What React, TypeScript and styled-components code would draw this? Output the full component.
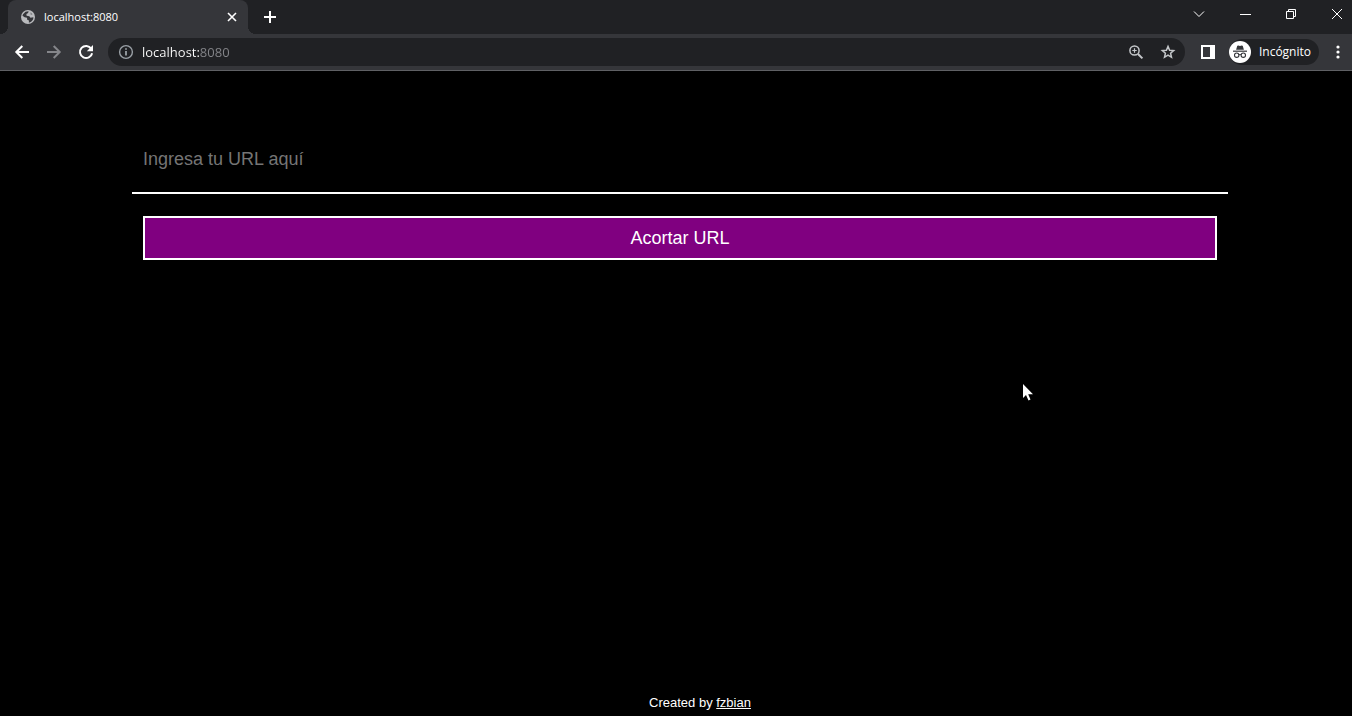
import React from 'react';
import styled, { createGlobalStyle } from 'styled-components';

const GlobalStyle = createGlobalStyle`
  * { box-sizing: border-box; }
  html, body, #root { height: 100%; }
  body { margin: 0; background: #000; overflow: hidden; }
  button, input { font: inherit; margin: 0; }
`;

const Window = styled.div`
  display: flex;
  flex-direction: column;
  min-height: 100%;
  background: #000;
  position: relative;
`;

const Chrome = styled.header`
  font-family: 'Open Sans', 'Noto Sans', sans-serif;
  color: #fff;
  background: #202124;
`;

const TabStrip = styled.div`
  display: flex;
  align-items: center;
  height: 34px;
  padding-left: 8px;
`;

const Tab = styled.div`
  display: flex;
  align-items: center;
  gap: 8px;
  position: relative;
  width: 240px;
  height: 34px;
  padding: 0 8px 0 12px;
  border-radius: 8px 8px 0 0;
  background: #35363a;
  font-size: 11px;
  line-height: 16px;

  &::before,
  &::after {
    content: '';
    position: absolute;
    bottom: 0;
    width: 8px;
    height: 8px;
  }
  &::before {
    right: 100%;
    background: radial-gradient(circle at 0 0, transparent 8px, #35363a 8px);
  }
  &::after {
    left: 100%;
    background: radial-gradient(circle at 100% 0, transparent 8px, #35363a 8px);
  }
`;

const TabTitle = styled.span`
  flex: 1;
`;

const IconButton = styled.button<{ $width?: number; $tone?: string }>`
  display: flex;
  align-items: center;
  justify-content: center;
  flex: none;
  width: ${(p) => p.$width ?? 32}px;
  height: 28px;
  padding: 0;
  border: 0;
  background: none;
  color: ${(p) => p.$tone ?? '#fff'};
`;

const WindowButtons = styled.div`
  display: flex;
  margin-left: auto;
  align-self: flex-start;
  margin-right: -8px;
`;

const Toolbar = styled.div`
  display: flex;
  align-items: center;
  height: 37px;
  padding: 0 0 0 6px;
  background: #35363a;
  border-bottom: 1px solid #5f6064;
`;

const AddressBar = styled.form`
  display: flex;
  align-items: center;
  flex: 1;
  height: 28px;
  margin: 0 7px 0 6px;
  padding: 0 1px 0 10px;
  border-radius: 14px;
  background: #202124;
  color: #9aa0a6;
`;

const AddressInput = styled.input`
  flex: 1;
  min-width: 0;
  height: 24px;
  padding: 0;
  margin-left: 8px;
  border: 0;
  outline: 0;
  font-size: 13px;
  color: #fff;
  background: linear-gradient(to right, #fff 58px, #85868a 58px);
  background-clip: text;
  -webkit-text-fill-color: transparent;
`;

const Profile = styled.button`
  display: flex;
  align-items: center;
  gap: 8px;
  height: 26px;
  margin: 0 5px;
  padding: 0 8px 0 0;
  border: 0;
  border-radius: 13px;
  background: #202124;
  color: #fff;
  font-size: 12px;
  line-height: 16px;
`;

const Page = styled.main`
  display: flex;
  flex-direction: column;
  flex: 1;
  padding: 53px 124px 0 132px;
  font-family: 'Liberation Sans', Arial, sans-serif;
  color: #fff;
`;

const ShortenForm = styled.form`
  display: flex;
  flex-direction: column;
`;

const UrlInput = styled.input`
  height: 70px;
  padding: 2px 11px 0;
  border: 0;
  border-bottom: 2px solid #fff;
  outline: 0;
  background: transparent;
  color: #fff;
  font-size: 18px;
  &::placeholder { color: #757575; opacity: 1; }
`;

const SubmitButton = styled.button`
  height: 44px;
  margin: 22px 11px 0;
  padding: 0;
  border: 2px solid #fff;
  background: #800080;
  color: #fff;
  font-size: 18px;
  line-height: 20px;
`;

const Footer = styled.footer`
  margin-top: auto;
  padding: 0 0 4px 40px;
  text-align: center;
  font-size: 13px;
  line-height: 18px;
`;

const FooterLink = styled.a`
  color: inherit;
  text-decoration: underline;
`;

const Pointer = styled.svg`
  position: absolute;
  left: 1022px;
  top: 383px;
`;

const Stroke = ({ size, d, w = 2 }: { size: number; d: string; w?: number }) => (
  <svg width={size} height={size} viewBox={`0 0 ${size} ${size}`} fill="none" stroke="currentColor" strokeWidth={w} aria-hidden="true">
    <path d={d} />
  </svg>
);

const GlobeIcon = () => (
  <svg width="16" height="16" viewBox="0 0 16 16" aria-hidden="true">
    <circle cx="8" cy="8" r="7" fill="#b9babd" />
    <path
      d="M3 5.2 5.5 2.8 8.6 2.2 8.1 4.1 6.4 5 6.6 6.7 9.3 7.2 10.5 8.8 13.4 8.2C13.5 11 11.4 13.2 8.8 13.6L9 11.6 7.2 10.7 7 8.8 4.6 8.3 2.5 6.8Z"
      fill="#35363a"
    />
    <path d="M10.4 3.2 12.6 5.2 10.8 5.9Z" fill="#77787b" />
  </svg>
);

const ReloadIcon = () => (
  <svg width="16" height="16" viewBox="0 0 16 16" aria-hidden="true">
    <path d="M13.2 4.6A6.1 6.1 0 1 0 14.1 9.2" fill="none" stroke="currentColor" strokeWidth="2" />
    <path d="M15 1v6.2H8.8Z" fill="currentColor" />
  </svg>
);

const InfoIcon = () => (
  <svg width="16" height="16" viewBox="0 0 16 16" aria-hidden="true">
    <circle cx="8" cy="8" r="6.4" fill="none" stroke="currentColor" strokeWidth="1.4" />
    <path d="M7.1 7h1.8v4.6H7.1ZM7.1 4.2h1.8v1.6H7.1Z" fill="currentColor" />
  </svg>
);

const ZoomIcon = () => (
  <svg width="16" height="16" viewBox="0 0 16 16" fill="none" stroke="currentColor" aria-hidden="true">
    <circle cx="6.5" cy="6.5" r="4.6" strokeWidth="1.5" />
    <path d="M10 10l4.4 4.4" strokeWidth="2" />
    <path d="M6.5 4.3v4.4M4.3 6.5h4.4" strokeWidth="1.2" />
  </svg>
);

const StarIcon = () => (
  <svg width="16" height="16" viewBox="0 0 16 16" aria-hidden="true">
    <path
      d="M8 2.4 9.6 6.2l4.1.4-3.1 2.7.9 4L8 11.2l-3.500 2.100.9-4L2.300 6.600 6.400 6.200Z"
      fill="none" stroke="currentColor" strokeWidth="1.5"
    />
  </svg>
);

const PanelIcon = () => (
  <svg width="14" height="14" viewBox="0 0 14 14" aria-hidden="true">
    <rect x="1" y="1" width="12" height="12" fill="none" stroke="currentColor" strokeWidth="2" />
    <path d="M9 1h4v12H9Z" fill="currentColor" />
  </svg>
);

const IncognitoIcon = () => (
  <svg width="22" height="22" viewBox="0 0 22 22" aria-hidden="true">
    <circle cx="11" cy="11" r="11" fill="#fff" />
    <path d="M7.1 8.7 8.2 5.1Q8.5 4.4 9.3 4.6L11 5 12.7 4.6Q13.5 4.4 13.8 5.1L14.9 8.7Z" fill="#35363a" />
    <path d="M4 10.2h14" stroke="#35363a" strokeWidth="1.2" />
    <g fill="none" stroke="#35363a" strokeWidth="1.1">
      <circle cx="7.7" cy="14.2" r="2.2" />
      <circle cx="14.3" cy="14.2" r="2.2" />
      <path d="M9.9 13.9Q11 13.1 12.1 13.9" />
    </g>
  </svg>
);

const RestoreIcon = () => (
  <svg width="12" height="12" viewBox="0 0 12 12" fill="none" stroke="currentColor" aria-hidden="true">
    <path d="M1.5 3.5h7v7h-7ZM3.5 3.5v-2h7v7h-2" />
  </svg>
);

const MenuIcon = () => (
  <svg width="16" height="16" viewBox="0 0 16 16" fill="currentColor" aria-hidden="true">
    <circle cx="8" cy="3" r="1.6" />
    <circle cx="8" cy="8" r="1.6" />
    <circle cx="8" cy="13" r="1.6" />
  </svg>
);

const stop = (e: React.FormEvent) => e.preventDefault();

export default function App() {
  return (
    <Window>
      <GlobalStyle />
      <Chrome>
        <TabStrip>
          <Tab>
            <GlobeIcon />
            <TabTitle>localhost:8080</TabTitle>
            <IconButton $width={16} aria-label="Cerrar pestaña">
              <Stroke size={10} w={1.6} d="M1 1l8 8M9 1L1 9" />
            </IconButton>
          </Tab>
          <IconButton $width={44} aria-label="Nueva pestaña">
            <Stroke size={12} d="M6 0v12M0 6h12" />
          </IconButton>
          <WindowButtons>
            <IconButton $width={46} aria-label="Buscar pestañas">
              <Stroke size={12} w={1} d="M1 3.5l5 5 5-5" />
            </IconButton>
            <IconButton $width={46} aria-label="Minimizar">
              <Stroke size={11} w={1} d="M0 5.5h11" />
            </IconButton>
            <IconButton $width={46} aria-label="Restaurar">
              <RestoreIcon />
            </IconButton>
            <IconButton $width={46} aria-label="Cerrar">
              <Stroke size={12} w={1} d="M1 1l10 10M11 1L1 11" />
            </IconButton>
          </WindowButtons>
        </TabStrip>
        <Toolbar>
          <IconButton aria-label="Atrás">
            <Stroke size={16} d="M15 8H2M8.3 2L2.300 8l6 6" />
          </IconButton>
          <IconButton $tone="#85868a" aria-label="Adelante">
            <Stroke size={16} d="M1 8H14M7.700 2L13.700 8l-6 6" />
          </IconButton>
          <IconButton aria-label="Recargar">
            <ReloadIcon />
          </IconButton>
          <AddressBar onSubmit={stop}>
            <InfoIcon />
            <AddressInput aria-label="Dirección" defaultValue="localhost:8080" />
            <IconButton type="button" $tone="#c4c7ca" aria-label="Zoom">
              <ZoomIcon />
            </IconButton>
            <IconButton type="button" $tone="#c4c7ca" aria-label="Añadir a favoritos">
              <StarIcon />
            </IconButton>
          </AddressBar>
          <IconButton aria-label="Panel lateral">
            <PanelIcon />
          </IconButton>
          <Profile>
            <IncognitoIcon />
            Incógnito
          </Profile>
          <IconButton $width={28} aria-label="Menú">
            <MenuIcon />
          </IconButton>
        </Toolbar>
      </Chrome>
      <Page>
        <ShortenForm onSubmit={stop}>
          <UrlInput type="text" aria-label="URL" placeholder="Ingresa tu URL aquí" />
          <SubmitButton>Acortar URL</SubmitButton>
        </ShortenForm>
        <Footer>
          Created by <FooterLink href="#fzbian">fzbian</FooterLink>
        </Footer>
      </Page>
      <Pointer width="12" height="18" viewBox="0 0 12 18" aria-hidden="true">
        <path d="M1 1v14l3-3 2.500 5.500 2-1-2.300-5.200H11Z" fill="#fff" />
      </Pointer>
    </Window>
  );
}
